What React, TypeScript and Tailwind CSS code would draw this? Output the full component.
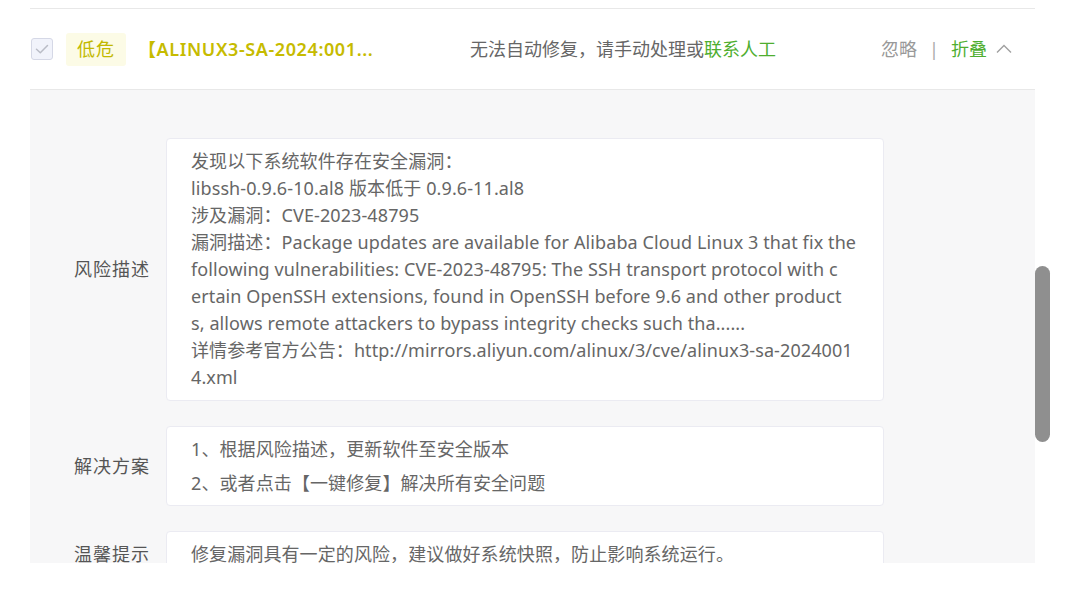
import React from "react";

const font = { fontFamily: '"Noto Sans", "Noto Sans CJK SC", sans-serif' };

function Card({ children, className = "" }: { children: React.ReactNode; className?: string }) {
  return (
    <div className={`w-[718px] rounded-[4px] border border-[#ebebf2] bg-white px-6 text-[18px] tracking-[0.1px] text-[#666666] ${className}`}>
      {children}
    </div>
  );
}

function Row({ label, children }: { label: string; children: React.ReactNode }) {
  return (
    <div className="flex items-center">
      <div className="w-[120px] text-right text-[18px] tracking-[1px] text-[#555555]">{label}</div>
      <div className="ml-4">{children}</div>
    </div>
  );
}

const descLines = [
  "发现以下系统软件存在安全漏洞：",
  "libssh-0.9.6-10.al8 版本低于 0.9.6-11.al8",
  "涉及漏洞：CVE-2023-48795",
  "漏洞描述：Package updates are available for Alibaba Cloud Linux 3 that fix the",
  "following vulnerabilities: CVE-2023-48795: The SSH transport protocol with c",
  "ertain OpenSSH extensions, found in OpenSSH before 9.6 and other product",
  "s, allows remote attackers to bypass integrity checks such tha......",
  "详情参考官方公告：http://mirrors.aliyun.com/alinux/3/cve/alinux3-sa-2024001",
  "4.xml",
];

export default function App() {
  return (
    <div className="relative h-[597px] w-[1081px] bg-white" style={font}>
      <div className="flex h-[563px] overflow-hidden">
        <div className="ml-[30px] w-[1005px] pt-2">
          <div className="flex h-[82px] items-center border-y border-[#e8e8e8] pl-px">
            <div className="flex h-[22px] w-[22px] items-center justify-center rounded-[3px] border border-[#d5d8e6] bg-[#f1f3fb]">
              <svg width="16" height="16" viewBox="0 0 16 16" fill="none">
                <path d="M2.5 8.2 L6.3 11.8 L13.5 4.5" stroke="#b9bcc6" strokeWidth="1.5" strokeLinecap="round" strokeLinejoin="round" />
              </svg>
            </div>
            <div className="ml-[13px] flex h-[33px] w-[60px] items-center justify-center rounded-[3px] bg-[#fcfbe6] text-[18px] tracking-[1px] text-[#c2b900]">
              低危
            </div>
            <div className="ml-[12px] w-[332px] text-[18px] font-semibold tracking-[0.6px] text-[#c6bb00]">【ALINUX3-SA-2024:001...</div>
            <div className="text-[18px] text-[#666666]">
              无法自动修复，请手动处理或<span className="text-[#4fae2f]">联系人工</span>
            </div>
            <div className="ml-auto mr-[22px] flex items-center text-[18px]">
              <span className="text-[#999999]">忽略</span>
              <span className="mx-[12px] text-[#aaaaaa]">|</span>
              <span className="text-[#4fae2f]">折叠</span>
              <svg className="ml-[8px]" width="18" height="18" viewBox="0 0 18 18" fill="none">
                <path d="M2 12.5 L9 5.5 L16 12.5" stroke="#a0a0a0" strokeWidth="1.4" />
              </svg>
            </div>
          </div>
          <div className="flex flex-col gap-[25px] bg-[#f7f7f8] pb-10 pt-[48px]">
            <Row label="风险描述">
              <Card className="py-[9px] leading-[27px] whitespace-nowrap">
                {descLines.map((l, i) => (
                  <div key={i}>{l}</div>
                ))}
              </Card>
            </Row>
            <Row label="解决方案">
              <Card className="flex h-[80px] flex-col justify-center gap-[7px] leading-[27px]">
                <div>1、根据风险描述，更新软件至安全版本</div>
                <div>2、或者点击【一键修复】解决所有安全问题</div>
              </Card>
            </Row>
            <Row label="温馨提示">
              <Card className="py-[9px] leading-[27px]">
                <div>修复漏洞具有一定的风险，建议做好系统快照，防止影响系统运行。</div>
              </Card>
            </Row>
          </div>
        </div>
        <div className="w-[15px] pt-[266px]">
          <div className="h-[176px] w-[15px] rounded-full bg-[#8f8f8f]" />
        </div>
      </div>
    </div>
  );
}
